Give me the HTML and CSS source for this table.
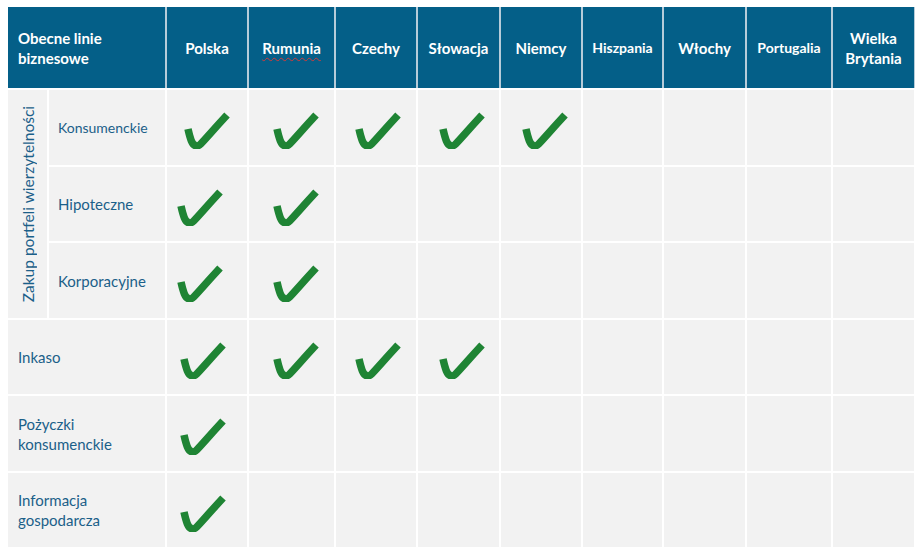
FILE: index.html
```html
<!DOCTYPE html>
<html lang="pl">
<head>
<meta charset="utf-8">
<link rel="stylesheet" href="styles.css">
</head>
<body>
<div class="table">
  <div class="th th-lead">Obecne linie<br>biznesowe</div>
  <div class="th">Polska</div>
  <div class="th"><span class="spell">Rumunia</span></div>
  <div class="th">Czechy</div>
  <div class="th">Słowacja</div>
  <div class="th">Niemcy</div>
  <div class="th th-small">Hiszpania</div>
  <div class="th">Włochy</div>
  <div class="th th-small">Portugalia</div>
  <div class="th th-last">Wielka<br>Brytania</div>

  <div class="td group"><span class="vert">Zakup portfeli wierzytelności</span></div>
  <div class="td sub sub-small">Konsumenckie</div>
  <div class="td ck ck-r1"><svg class="check" viewBox="0 0 46 38"><path d="M4 18 C6 27 8 35 13 35 C16 35 19 30 43 4"/></svg></div>
  <div class="td ck ck-r1 ck-ru"><svg class="check" viewBox="0 0 46 38"><path d="M4 18 C6 27 8 35 13 35 C16 35 19 30 43 4"/></svg></div>
  <div class="td ck ck-r1 ck-cz"><svg class="check" viewBox="0 0 46 38"><path d="M4 18 C6 27 8 35 13 35 C16 35 19 30 43 4"/></svg></div>
  <div class="td ck ck-r1 ck-sk"><svg class="check" viewBox="0 0 46 38"><path d="M4 18 C6 27 8 35 13 35 C16 35 19 30 43 4"/></svg></div>
  <div class="td ck ck-r1 ck-de"><svg class="check" viewBox="0 0 46 38"><path d="M4 18 C6 27 8 35 13 35 C16 35 19 30 43 4"/></svg></div>
  <div class="td"></div><div class="td"></div><div class="td"></div><div class="td"></div>

  <div class="td sub">Hipoteczne</div>
  <div class="td ck ck-pl2"><svg class="check" viewBox="0 0 46 38"><path d="M4 18 C6 27 8 35 13 35 C16 35 19 30 43 4"/></svg></div>
  <div class="td ck ck-ru"><svg class="check" viewBox="0 0 46 38"><path d="M4 18 C6 27 8 35 13 35 C16 35 19 30 43 4"/></svg></div>
  <div class="td"></div><div class="td"></div><div class="td"></div><div class="td"></div><div class="td"></div><div class="td"></div><div class="td"></div>

  <div class="td sub">Korporacyjne</div>
  <div class="td ck ck-pl2"><svg class="check" viewBox="0 0 46 38"><path d="M4 18 C6 27 8 35 13 35 C16 35 19 30 43 4"/></svg></div>
  <div class="td ck ck-ru"><svg class="check" viewBox="0 0 46 38"><path d="M4 18 C6 27 8 35 13 35 C16 35 19 30 43 4"/></svg></div>
  <div class="td"></div><div class="td"></div><div class="td"></div><div class="td"></div><div class="td"></div><div class="td"></div><div class="td"></div>

  <div class="td label">Inkaso</div>
  <div class="td ck ck-pl3"><svg class="check" viewBox="0 0 46 38"><path d="M4 18 C6 27 8 35 13 35 C16 35 19 30 43 4"/></svg></div>
  <div class="td ck ck-ru"><svg class="check" viewBox="0 0 46 38"><path d="M4 18 C6 27 8 35 13 35 C16 35 19 30 43 4"/></svg></div>
  <div class="td ck ck-cz"><svg class="check" viewBox="0 0 46 38"><path d="M4 18 C6 27 8 35 13 35 C16 35 19 30 43 4"/></svg></div>
  <div class="td ck ck-sk"><svg class="check" viewBox="0 0 46 38"><path d="M4 18 C6 27 8 35 13 35 C16 35 19 30 43 4"/></svg></div>
  <div class="td"></div><div class="td"></div><div class="td"></div><div class="td"></div><div class="td"></div>

  <div class="td label">Pożyczki<br>konsumenckie</div>
  <div class="td ck ck-pl3"><svg class="check" viewBox="0 0 46 38"><path d="M4 18 C6 27 8 35 13 35 C16 35 19 30 43 4"/></svg></div>
  <div class="td"></div><div class="td"></div><div class="td"></div><div class="td"></div><div class="td"></div><div class="td"></div><div class="td"></div><div class="td"></div>

  <div class="td label">Informacja<br>gospodarcza</div>
  <div class="td ck ck-pl3"><svg class="check" viewBox="0 0 46 38"><path d="M4 18 C6 27 8 35 13 35 C16 35 19 30 43 4"/></svg></div>
  <div class="td"></div><div class="td"></div><div class="td"></div><div class="td"></div><div class="td"></div><div class="td"></div><div class="td"></div><div class="td"></div>
</div>
</body>
</html>
```
FILE: styles.css
```css
html, body {
  background: #ffffff;
}
body {
  margin: 7px 0 0 8px;
  font-family: Lato, "Open Sans", sans-serif;
}
.table {
  display: grid;
  width: 906px;
  grid-template-columns: 39px 116px 80px 85px 80px 81px 80px 79px 81px 84px 81px;
  grid-template-rows: 81px 75px 74px 75px 74px 75px 74px;
  gap: 2px;
  background: #ffffff;
}
.th {
  background: #045f88;
  color: #ffffff;
  font-weight: 700;
  font-size: 15px;
  line-height: 20px;
  display: flex;
  align-items: center;
  justify-content: center;
  text-align: center;
  box-shadow: 2px 0 0 #b7ccd9;
}
.th-last {
  box-shadow: 1px 0 0 #b7ccd9;
}
.th-lead {
  grid-column: span 2;
  justify-content: flex-start;
  text-align: left;
  padding-left: 10px;
}
.th-small {
  font-size: 14px;
}
.spell {
  text-decoration: underline wavy #d23a3a;
  text-decoration-thickness: 1px;
  text-underline-offset: 3px;
}
.td {
  background: #f2f2f2;
  color: #1b6089;
  font-size: 15px;
  line-height: 20px;
}
.group {
  grid-row: span 3;
  display: flex;
  align-items: center;
  justify-content: center;
}
.vert {
  writing-mode: vertical-rl;
  transform: rotate(180deg);
  white-space: nowrap;
  font-size: 15.5px;
}
.sub {
  display: flex;
  align-items: center;
  padding-left: 9px;
}
.sub-small {
  font-size: 14px;
}
.label {
  grid-column: span 2;
  display: flex;
  align-items: center;
  padding-left: 10px;
}
.ck {
  display: flex;
  align-items: center;
  justify-content: center;
  padding-top: 5px;
}
.check {
  width: 46px;
  height: 38px;
}
.check path {
  fill: none;
  stroke: #1f8434;
  stroke-width: 7.5;
}
.ck-r1 { padding-left: 0; }
.ck-ru { padding-left: 9px; }
.ck-cz { padding-left: 4px; }
.ck-sk { padding-left: 7px; }
.ck-de { padding-left: 8px; }
.ck-pl2 { padding-right: 14px; }
.ck-pl3 { padding-right: 8px; }
```
